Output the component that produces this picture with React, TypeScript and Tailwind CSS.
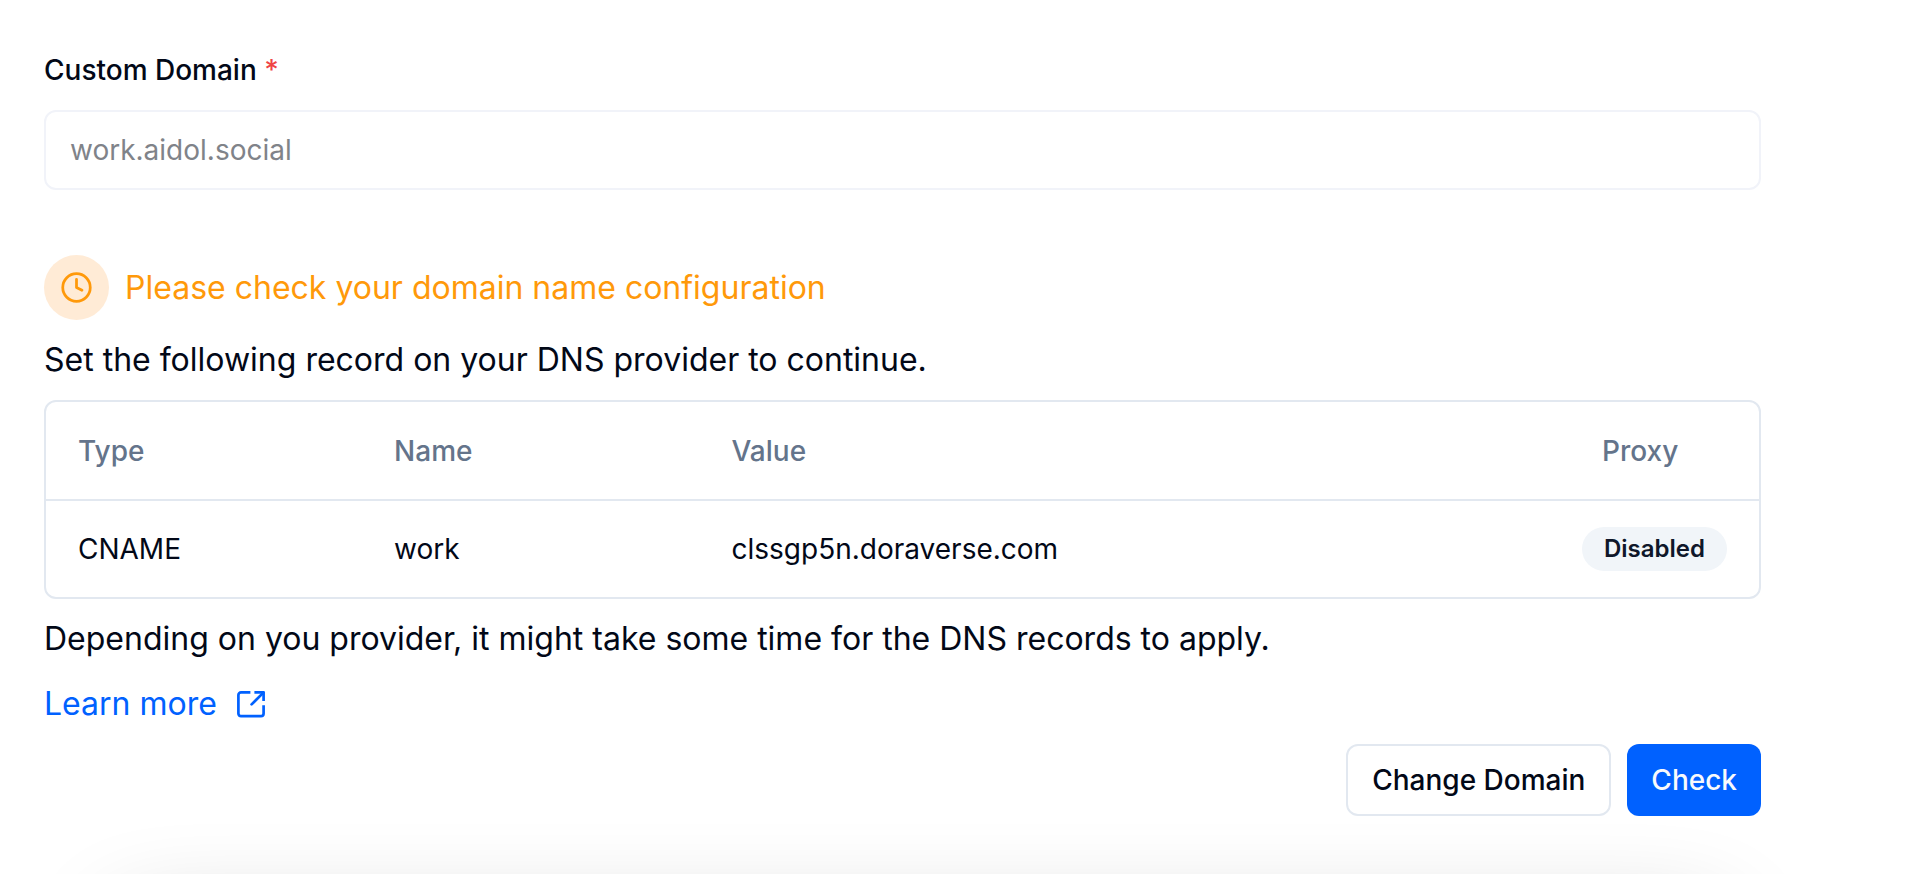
import React, { useState } from "react";
import { Clock } from "lucide-react";

type DnsRecord = {
  type: string;
  name: string;
  value: string;
  proxy: string;
};

const records: DnsRecord[] = [
  { type: "CNAME", name: "work", value: "clssgp5n.doraverse.com", proxy: "Disabled" },
];

function ExternalLinkIcon() {
  return (
    <svg
      viewBox="0 0 32 32"
      className="size-8"
      fill="none"
      stroke="currentColor"
      strokeWidth="2.7"
      strokeLinejoin="round"
      aria-hidden="true"
    >
      <path d="M15.400 4.400H6A2.600 2.600 0 0 0 3.400 7V25.600A2.600 2.600 0 0 0 6 28.200H26A2.600 2.600 0 0 0 28.600 25.600V17.200" />
      <path d="M19.400 4.400H28.600V13" />
      <path d="M28.400 4.600 16.600 16.400" strokeLinecap="round" />
    </svg>
  );
}

function RecordTable() {
  return (
    <div className="mt-5 overflow-hidden rounded-xl border-2 border-[#e2e8f0]">
      <table className="w-full table-fixed border-collapse text-left text-[28px] leading-8">
        <colgroup>
          <col className="w-[18.45%]" />
          <col className="w-[19.7%]" />
          <col />
          <col className="w-[210px]" />
        </colgroup>
        <thead>
          <tr className="h-[98px] border-b-2 border-[#e2e8f0] text-[#64748b]">
            <th className="px-8 font-medium">Type</th>
            <th className="px-8 font-medium">Name</th>
            <th className="px-8 font-medium">Value</th>
            <th className="pl-[53px] font-medium">Proxy</th>
          </tr>
        </thead>
        <tbody>
          {records.map((r) => (
            <tr key={r.name} className="h-[97px]">
              <td className="px-8">{r.type}</td>
              <td className="px-8">{r.name}</td>
              <td className="px-8">{r.value}</td>
              <td className="pr-8">
                <div className="flex justify-end">
                  <span className="flex h-11 items-center rounded-full bg-[#f1f5f9] px-[22px] text-2xl font-semibold text-[#0f172a]">
                    {r.proxy}
                  </span>
                </div>
              </td>
            </tr>
          ))}
        </tbody>
      </table>
    </div>
  );
}

export default function App() {
  const [domain, setDomain] = useState("work.aidol.social");

  return (
    <div className="flex min-h-screen flex-col overflow-hidden bg-white font-['Inter',sans-serif] text-[#020817] antialiased [font-optical-sizing:none]">
      <main className="relative z-10 flex flex-col pt-[54px] pr-[159px] pl-11">
        <label htmlFor="domain" className="text-[28px] leading-8 font-medium">
          Custom Domain <span className="text-[#ef4444]">*</span>
        </label>
        <input
          id="domain"
          value={domain}
          onChange={(e) => setDomain(e.target.value)}
          className="mt-6 h-20 w-full rounded-xl border-2 border-[#f1f3f9] bg-white px-6 text-[28px] text-[#808389] outline-none"
        />

        <div className="mt-[65px] flex items-center gap-4 text-[#ff990a]">
          <span className="flex size-[65px] items-center justify-center rounded-full bg-[#ffebd6]">
            <Clock className="size-[33px]" strokeWidth={2} />
          </span>
          <p className="text-[32px] leading-10">Please check your domain name configuration</p>
        </div>

        <p className="mt-5 text-[32px] leading-10">
          Set the following record on your DNS provider to continue.
        </p>

        <RecordTable />

        <p className="mt-5 text-[32px] leading-10">
          Depending on you provider, it might take some time for the DNS records to apply.
        </p>
        <a
          href="#learn-more"
          className="mt-[25px] flex items-center gap-[18px] self-start text-[32px] leading-10 text-[#0061ff]"
        >
          Learn more
          <ExternalLinkIcon />
        </a>

        <div className="mt-5 flex justify-end gap-4 text-[28px] font-medium">
          <button
            type="button"
            className="h-[72px] rounded-xl border-2 border-[#e2e8f0] bg-white px-6"
          >
            Change Domain
          </button>
          <button type="button" className="h-[72px] rounded-xl bg-[#0061ff] px-6 text-slate-50">
            Check
          </button>
        </div>
      </main>

      <div className="mt-auto mr-[300px] ml-[220px] shadow-[0_150px_100px_100px_rgba(0,0,0,0.24)]" />
    </div>
  );
}
